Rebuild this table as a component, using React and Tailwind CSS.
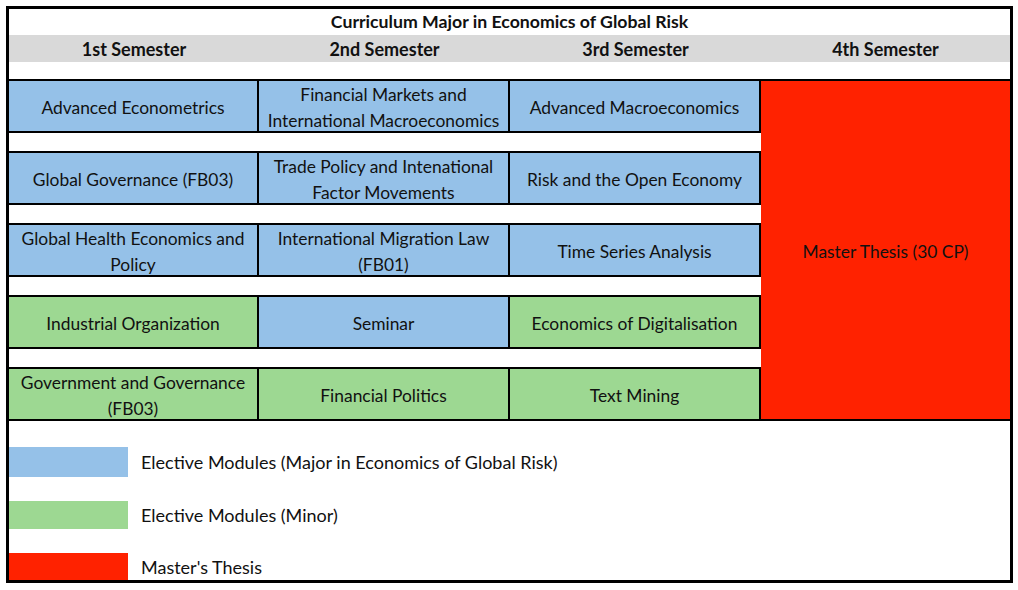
const rows = [
  [
    { name: "Advanced Econometrics", kind: "major" },
    { name: "Financial Markets and International Macroeconomics", kind: "major" },
    { name: "Advanced Macroeconomics", kind: "major" },
  ],
  [
    { name: "Global Governance (FB03)", kind: "major" },
    { name: "Trade Policy and Intenational Factor Movements", kind: "major" },
    { name: "Risk and the Open Economy", kind: "major" },
  ],
  [
    { name: "Global Health Economics and Policy", kind: "major" },
    { name: "International Migration Law (FB01)", kind: "major" },
    { name: "Time Series Analysis", kind: "major" },
  ],
  [
    { name: "Industrial Organization", kind: "minor" },
    { name: "Seminar", kind: "major" },
    { name: "Economics of Digitalisation", kind: "minor" },
  ],
  [
    { name: "Government and Governance (FB03)", kind: "minor" },
    { name: "Financial Politics", kind: "minor" },
    { name: "Text Mining", kind: "minor" },
  ],
];

const semesters = ["1st Semester", "2nd Semester", "3rd Semester", "4th Semester"];

const legend = [
  { label: "Elective Modules (Major in Economics of Global Risk)", swatch: "bg-[#95c1e8] h-[30px]" },
  { label: "Elective Modules (Minor)", swatch: "bg-[#9dd892] h-[28px]" },
  { label: "Master's Thesis", swatch: "bg-[#ff2200] h-[27px]" },
];

function Cell({ name, kind }) {
  return (
    <div
      className={
        "flex items-center justify-center text-center border-r-2 border-black px-1 pt-[4px] " +
        (kind === "minor" ? "bg-[#9dd892]" : "bg-[#95c1e8]")
      }
    >
      {name}
    </div>
  );
}

export default function App() {
  return (
    <div
      className="w-[1018px] h-[590px] bg-white p-[6px] text-[#111] text-[17.4px] leading-[26px]"
      style={{ fontFamily: "Lato, 'Open Sans', sans-serif" }}
    >
      <div className="w-[1007px] h-[577px] border-[3px] border-black flex flex-col">
        {/* title */}
        <div className="h-[26px] flex items-center justify-center font-bold text-[17.7px]">
          Curriculum Major in Economics of Global Risk
        </div>

        {/* semester header */}
        <div className="h-[27px] grid grid-cols-[250px_251px_251px_249px] bg-[#d9d9d9] font-bold text-[18px]">
          {semesters.map((s) => (
            <div key={s} className="flex items-center justify-center">
              {s}
            </div>
          ))}
        </div>
        <div className="h-[17px]" />

        {/* modules + thesis */}
        <div className="flex">
          <div className="w-[752px] flex flex-col gap-[18px]">
            {rows.map((row, i) => (
              <div
                key={i}
                className="h-[54px] grid grid-cols-[250px_251px_251px] grid-rows-[50px] border-y-2 border-black"
              >
                {row.map((c) => (
                  <Cell key={c.name} {...c} />
                ))}
              </div>
            ))}
          </div>
          <div className="flex-1 bg-[#ff2200] border-y-2 border-black pt-[4px] flex items-center justify-center">
            Master Thesis (30 CP)
          </div>
        </div>

        {/* legend */}
        <div className="flex-1 flex flex-col pt-[26px] gap-[24px] text-[18px]">
          {legend.map((l) => (
            <div key={l.label} className="flex items-center">
              <div className={"w-[119px] " + l.swatch} />
              <span className="ml-[13px]">{l.label}</span>
            </div>
          ))}
        </div>
      </div>
    </div>
  );
}
